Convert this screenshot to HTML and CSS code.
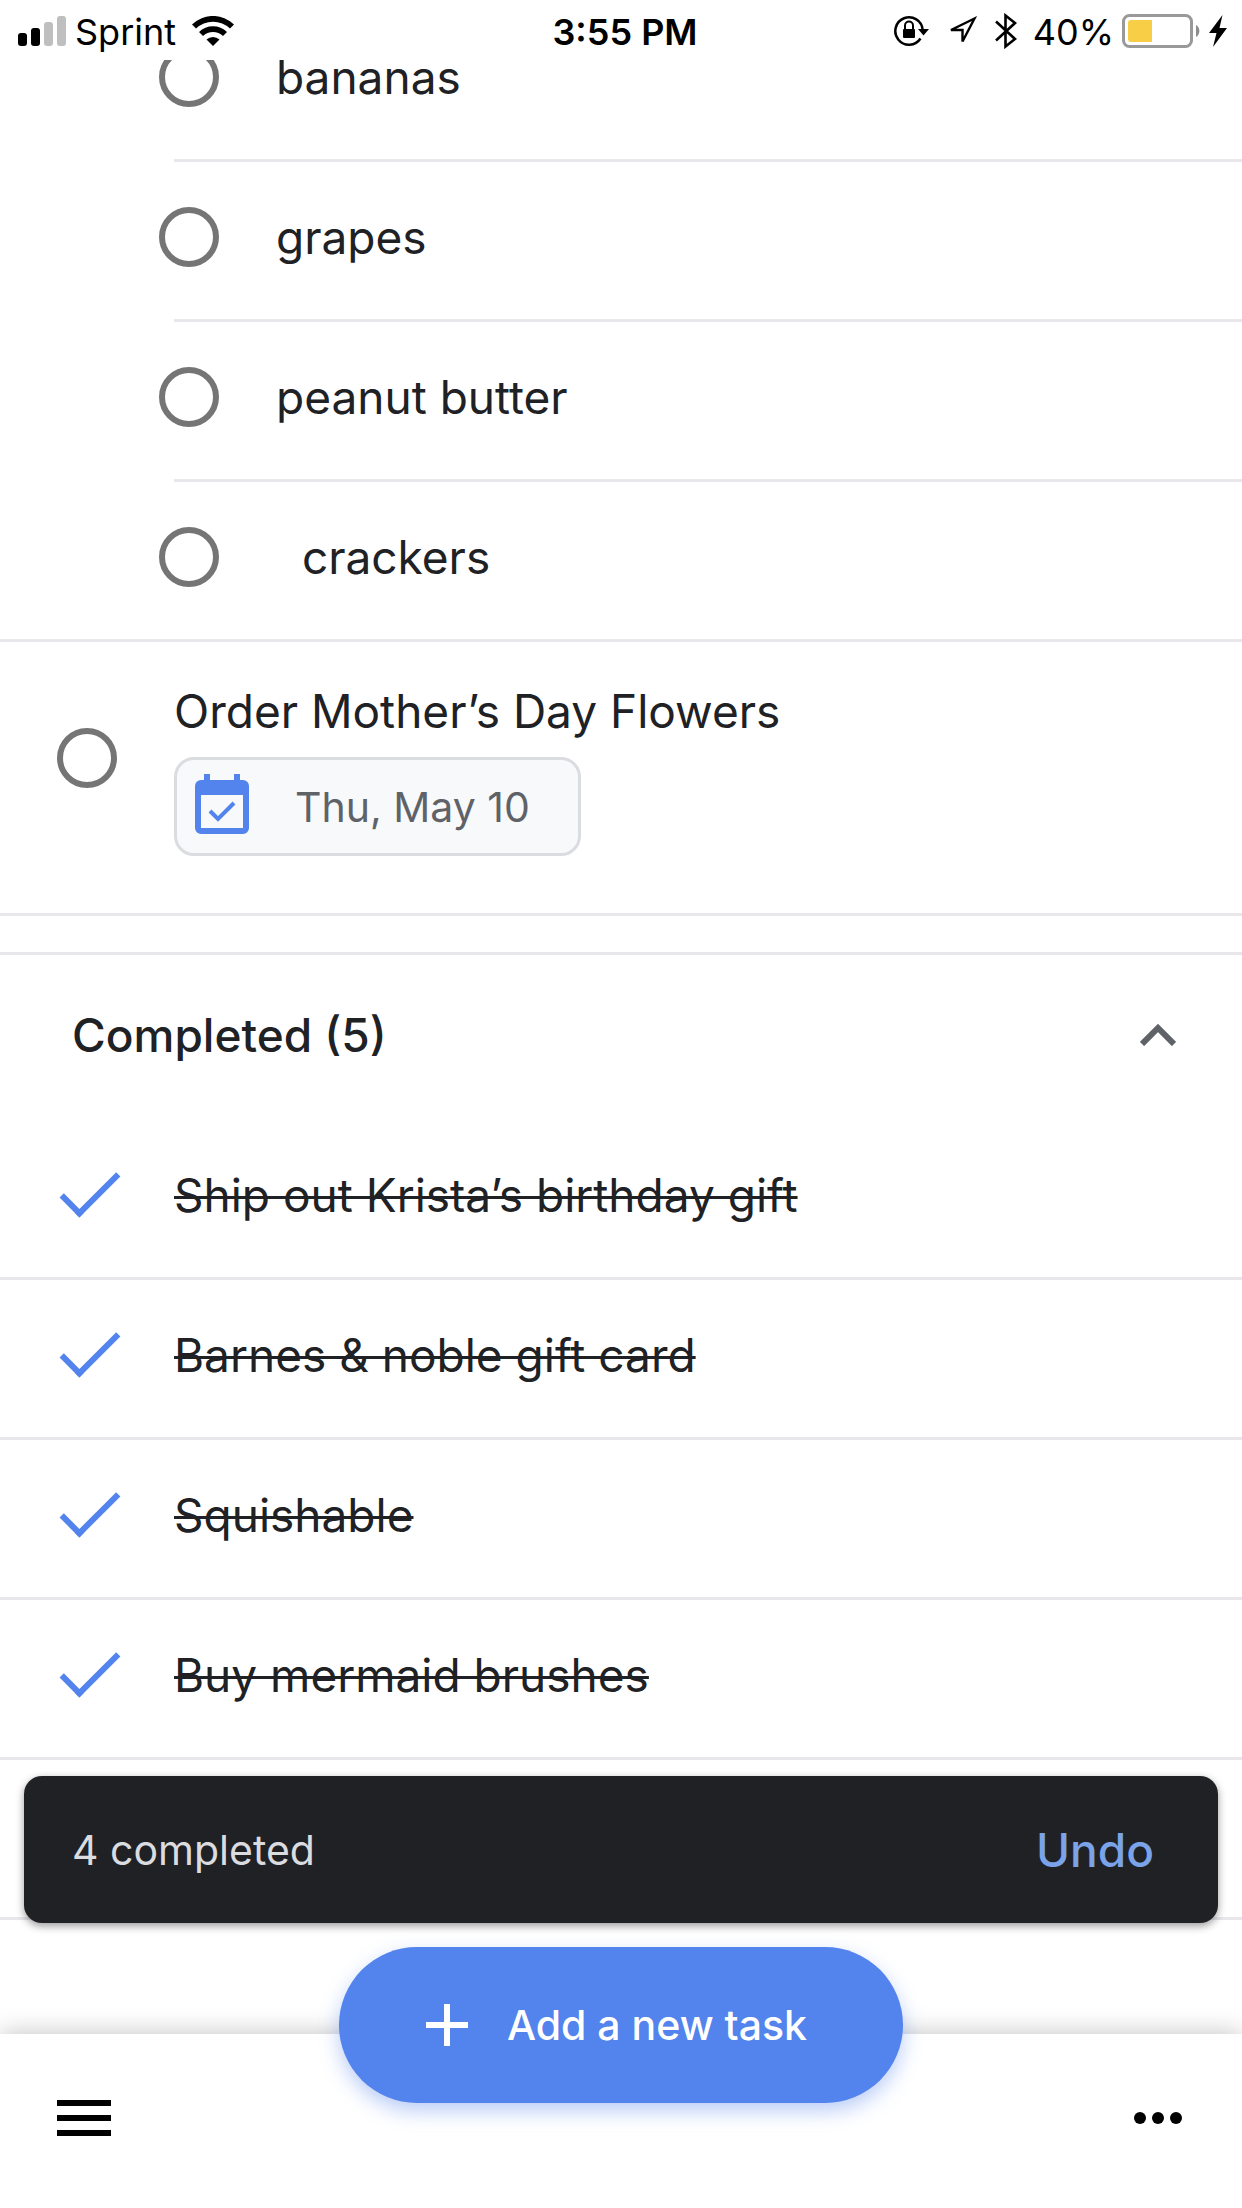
FILE: index.html
```html
<!DOCTYPE html>
<html lang="en">
<head>
  <meta charset="UTF-8" />
  <title>Tasks</title>
  <meta name="viewport" content="width=device-width, initial-scale=1.0" />
  <link rel="stylesheet" href="styles.css">
</head>
<body>
  <header class="status-bar">
    <div class="status-left">
      <svg class="signal" width="48" height="30" viewBox="0 0 48 30">
        <rect x="0" y="17" width="9" height="13" rx="3" />
        <rect x="13" y="12" width="9" height="18" rx="3" />
        <rect x="26" y="6" width="9" height="24" rx="3" fill="#bfbfbf" />
        <rect x="39" y="0" width="9" height="30" rx="3" fill="#bfbfbf" />
      </svg>
      <span>Sprint</span>
      <svg class="wifi" width="42" height="30" viewBox="0 0 42 30">
        <path d="M0 8.500 A30 30 0 0 1 42 8.500 L38 12.500 A24.500 24.500 0 0 0 4 12.500 Z" />
        <path d="M7 16 A20 20 0 0 1 35 16 L31 20 A14.500 14.500 0 0 0 11 20 Z" />
        <path d="M14.500 23.500 A9.500 9.500 0 0 1 27.500 23.500 L21 30 Z" />
      </svg>
    </div>
    <div class="status-time">3:55 PM</div>
    <div class="status-right">
      <svg width="35" height="32" viewBox="0 0 35 32">
        <path d="M26.500 23.500 A13.700 13.700 0 1 1 28.700 15" fill="none" stroke="#000" stroke-width="2.500" />
        <path d="M24 14 H35 L29.500 20.500 Z" />
        <rect x="9" y="14" width="12" height="9" rx="1" />
        <path d="M11 15 V10.500 a4 4 0 0 1 8 0 V15" fill="none" stroke="#000" stroke-width="2" />
      </svg>
      <svg width="30" height="32" viewBox="0 0 30 32">
        <path d="M27.500 3.500 L4 15 H15.500 V26.500 Z" fill="none" stroke="#000" stroke-width="2.400" />
      </svg>
      <svg width="22" height="36" viewBox="0 0 22 36">
        <path d="M1 8.500 L20 26 L10.500 33.500 V2.500 L20 10 L1 27.500" fill="none" stroke="#000" stroke-width="2.600" />
      </svg>
      <span>40%</span>
      <svg width="79" height="34" viewBox="0 0 79 34">
        <rect x="1.500" y="1.500" width="68" height="31" rx="6" fill="none" stroke="#999" stroke-width="3" />
        <path d="M6 9 a3 3 0 0 1 3-3 H30 V28 H9 a3 3 0 0 1-3-3 Z" fill="#f7ce46" />
        <path d="M74 11 a7 7 0 0 1 0 12 Z" fill="#8c8c8c" />
      </svg>
      <svg class="bolt" width="18" height="32" viewBox="0 0 18 32">
        <path d="M13.500 0 L0 18 H7.500 L4 32 L18 13 H10.500 Z" />
      </svg>
    </div>
  </header>

  <main class="content">
    <ul class="task-list subtasks">
      <li class="task">
        <input class="check" type="checkbox" id="bananas">
        <label class="task-title" for="bananas">bananas</label>
      </li>
      <li class="task">
        <input class="check" type="checkbox" id="grapes">
        <label class="task-title" for="grapes">grapes</label>
      </li>
      <li class="task">
        <input class="check" type="checkbox" id="peanut-butter">
        <label class="task-title" for="peanut-butter">peanut butter</label>
      </li>
      <li class="task">
        <input class="check" type="checkbox" id="crackers">
        <label class="task-title" for="crackers">&nbsp;&nbsp;crackers</label>
      </li>
    </ul>

    <div class="task task-dated">
      <input class="check" type="checkbox" id="flowers">
      <div class="task-body">
        <label class="task-title" for="flowers">Order Mother’s Day Flowers</label>
        <button class="date-chip" type="button">
          <svg width="54" height="60" viewBox="0 0 54 60">
            <path fill="#5383ec" fill-rule="evenodd" d="M9 0 h6 v6 h24 v-6 h6 v6 h3 a6 6 0 0 1 6 6 v42 a6 6 0 0 1-6 6 H6 a6 6 0 0 1-6-6 V12 a6 6 0 0 1 6-6 h3 Z M6 21 V54 H48 V21 Z" />
            <path d="M15 37 L23 45 L39 29" fill="none" stroke="#5383ec" stroke-width="4" />
          </svg>
          <span>Thu, May 10</span>
        </button>
      </div>
    </div>

    <section class="completed">
      <button class="completed-header" type="button">
        <span>Completed (5)</span>
        <svg width="36" height="22" viewBox="0 0 36 22">
          <path d="M2 20 L18 4 L34 20" fill="none" stroke="#5f6368" stroke-width="6" />
        </svg>
      </button>
      <ul class="task-list">
        <li class="task">
          <input class="check" type="checkbox" id="gift" checked>
          <label class="task-title" for="gift">Ship out Krista’s birthday gift</label>
        </li>
        <li class="task">
          <input class="check" type="checkbox" id="gift-card" checked>
          <label class="task-title" for="gift-card">Barnes &amp; noble gift card</label>
        </li>
        <li class="task">
          <input class="check" type="checkbox" id="squishable" checked>
          <label class="task-title" for="squishable">Squishable</label>
        </li>
        <li class="task">
          <input class="check" type="checkbox" id="brushes" checked>
          <label class="task-title" for="brushes">Buy mermaid brushes</label>
        </li>
        <li class="task"></li>
      </ul>
    </section>
  </main>

  <footer class="bottom-bar">
    <div class="snackbar" role="status">
      <span>4 completed</span>
      <button class="undo" type="button">Undo</button>
    </div>
    <button class="icon-button" type="button" aria-label="Menu">
      <svg width="54" height="36" viewBox="0 0 54 36">
        <path d="M0 0 h54 v6 H0 Z M0 15 h54 v6 H0 Z M0 30 h54 v6 H0 Z" />
      </svg>
    </button>
    <button class="add-task" type="button">
      <svg width="42" height="42" viewBox="0 0 42 42">
        <path d="M18 0 h6 v18 h18 v6 H24 v18 h-6 V24 H0 v-6 h18 Z" fill="#fff" />
      </svg>
      <span>Add a new task</span>
    </button>
    <button class="icon-button" type="button" aria-label="More options">
      <svg width="48" height="12" viewBox="0 0 48 12">
        <circle cx="6" cy="6" r="6" />
        <circle cx="24" cy="6" r="6" />
        <circle cx="42" cy="6" r="6" />
      </svg>
    </button>
  </footer>
</body>
</html>
```
FILE: styles.css
```css
:root {
  --text: #202124;
  --text-muted: #5f6368;
  --line: #e8e8ec;
  --blue: #5383ec;
  --circle: #757575;
}

*,
*::before {
  box-sizing: border-box;
}

body {
  margin: 0;
  height: 100vh;
  display: flex;
  flex-direction: column;
  overflow: hidden;
  background: #fff;
  color: var(--text);
  font-family: Inter, "Liberation Sans", sans-serif;
  font-size: 46px;
}

svg {
  display: block;
  flex: none;
}

button {
  margin: 0;
  padding: 0;
  border: none;
  background: none;
  color: inherit;
  font: inherit;
  cursor: pointer;
}

/* status bar */
.status-bar {
  flex: none;
  display: grid;
  grid-template-columns: 1fr auto 1fr;
  align-items: center;
  height: 60px;
  padding: 0 15px 0 18px;
  background: #fff;
  color: #000;
  font-size: 36px;
  line-height: 60px;
  z-index: 1;
}

.status-left,
.status-right {
  display: flex;
  align-items: center;
  height: 60px;
}

.status-left span,
.status-right span,
.status-time {
  padding-top: 2px;
}

.signal {
  margin-right: 9px;
}

.wifi {
  margin-left: 16px;
}

.status-time {
  padding-left: 5px;
  font-weight: 600;
}

.status-right {
  justify-content: flex-end;
  gap: 18px;
}

.status-right span {
  margin: 0 -10px 0 -2px;
}

.bolt {
  margin-left: -10px;
}

/* tasks */
.content {
  flex: 1;
  min-height: 0;
  margin-top: -58px;
}

.task-list {
  margin: 0;
  padding: 0;
  list-style: none;
}

.task {
  display: flex;
  align-items: center;
  gap: 57px;
  min-height: 160px;
  padding: 0 57px 7px;
  border-bottom: 3px solid var(--line);
}

.subtasks {
  border-bottom: 3px solid var(--line);
}

.subtasks .task {
  margin-left: 174px;
  padding-left: 0;
}

.subtasks .task:last-child {
  min-height: 157px;
  padding-bottom: 7px;
  border-bottom: none;
}

.subtasks .check {
  margin-left: -15px;
}

.task-title {
  line-height: 60px;
}

.check {
  appearance: none;
  flex: none;
  display: flex;
  align-items: center;
  justify-content: center;
  width: 60px;
  height: 60px;
  margin: 0;
  border: 6px solid var(--circle);
  border-radius: 50%;
}

.check:checked {
  padding: 0 0 16px 5px;
  border: none;
  border-radius: 0;
}

/* tick: two sides of a turned box */
.check:checked::before {
  content: "";
  flex: none;
  width: 28px;
  height: 58px;
  border: solid var(--blue);
  border-width: 0 6px 6px 0;
  transform: rotate(45deg);
}

.task-dated {
  align-items: flex-start;
  padding-top: 39px;
  padding-bottom: 57px;
}

.task-dated .check {
  margin-top: 47px;
}

.task-body {
  display: flex;
  flex-direction: column;
  align-items: flex-start;
  gap: 16px;
}

.date-chip {
  display: flex;
  align-items: center;
  gap: 46px;
  height: 99px;
  padding: 0 48px 0 18px;
  border: 3px solid #dadce0;
  border-radius: 20px;
  background: #f8f9fb;
  color: var(--text-muted);
  font-size: 41px;
}

.date-chip svg {
  margin-bottom: 6px;
}

/* completed section */
.completed {
  margin-top: 36px;
  border-top: 3px solid var(--line);
}

.completed-header {
  display: flex;
  align-items: center;
  justify-content: space-between;
  width: 100%;
  height: 165px;
  padding: 0 66px 5px 72px;
  font-weight: 500;
}

.completed .task-title {
  text-decoration: line-through;
  text-decoration-thickness: 3px;
}

/* bottom bar */
.bottom-bar {
  position: relative;
  flex: none;
  display: flex;
  align-items: center;
  justify-content: space-between;
  height: 174px;
  padding: 0 60px 6px 57px;
  background: #fff;
  box-shadow: 0 0 24px rgba(0, 0, 0, 0.25);
}

.icon-button {
  padding: 30px 0;
}

.add-task {
  position: absolute;
  left: 50%;
  bottom: 105px;
  transform: translateX(-50%);
  display: flex;
  align-items: center;
  gap: 39px;
  height: 156px;
  padding: 0 96px 0 87px;
  border-radius: 78px;
  background: var(--blue);
  box-shadow: 0 8px 20px rgba(83, 131, 236, 0.4);
  color: #fff;
  font-size: 41px;
  font-weight: 500;
  white-space: nowrap;
}

.snackbar {
  position: absolute;
  left: 24px;
  right: 24px;
  bottom: 285px;
  display: flex;
  align-items: center;
  justify-content: space-between;
  height: 147px;
  padding: 0 64px 0 48px;
  border-radius: 18px;
  background: var(--text);
  box-shadow: 0 3px 9px rgba(0, 0, 0, 0.4);
  color: #dadce0;
  font-size: 41px;
}

.undo {
  color: #7ba3e8;
  font-size: 46px;
  font-weight: 500;
}
```
